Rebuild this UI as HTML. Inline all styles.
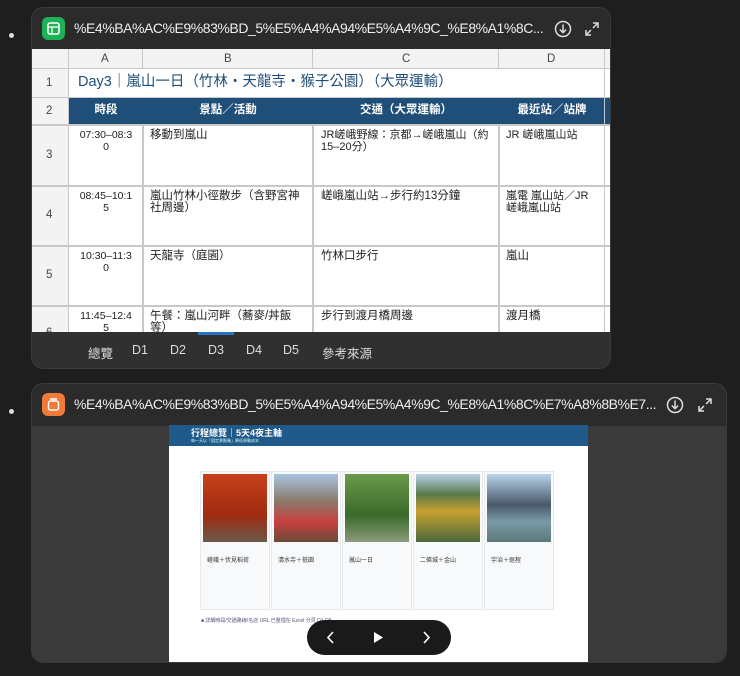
<!DOCTYPE html>
<html><head><meta charset="utf-8"><style>
*{margin:0;padding:0;box-sizing:border-box}
body{width:740px;height:676px;background:#1e1e1e;font-family:"Liberation Sans","Noto Sans CJK TC",sans-serif;position:relative;overflow:hidden;color:#222}
.dot{position:absolute;width:5px;height:5px;border-radius:50%;background:#ddd;left:9px}
.card{position:absolute;background:#2b2b2b;border:1px solid #3a3a3a;border-radius:12px;overflow:hidden}
.hdr{position:absolute;left:0;right:0;top:0;height:42px;color:#eee;font-size:14px}
.hdr .ic{position:absolute;left:10px;top:9px;width:23px;height:23px;border-radius:6px}
.hdr .t{position:absolute;left:42px;top:12px;white-space:nowrap;letter-spacing:-0.45px}
.abs{position:absolute}
.g{position:absolute;background:#c8c8c8}
.cell{position:absolute;font-size:11.5px;line-height:12px;color:#222}
.tab{position:absolute;top:343px;color:#ddd;font-size:12.5px}
.sc{position:absolute;top:46px;width:70px;height:139px;background:#f7f9fb;border:1px solid #e6e8ea}
.im{position:absolute;top:49px;width:64px;height:68px}
.st{position:absolute;top:130px;font-size:6px;color:#333;white-space:nowrap}
</style></head><body>
<div class="dot" style="top:33px"></div>
<div class="dot" style="top:409px"></div>

<div class="card" style="left:31px;top:7px;width:580px;height:362px">
 <div class="hdr"><div class="ic" style="background:#1fb157"><svg width="23" height="23"><rect x="6" y="6" width="11" height="11" rx="2" fill="none" stroke="#fff" stroke-width="1.5"/><line x1="6" y1="10" x2="17" y2="10" stroke="#fff" stroke-width="1.3"/><line x1="10" y1="10" x2="10" y2="17" stroke="#fff" stroke-width="1.3"/></svg></div>
 <div class="t">%E4%BA%AC%E9%83%BD_5%E5%A4%A94%E5%A4%9C_%E8%A1%8C...</div>
 <svg class="abs" style="left:522px;top:12px" width="18" height="18"><circle cx="9" cy="9" r="7.5" fill="none" stroke="#ddd" stroke-width="1.5"/><path d="M9 4.5v8M5.8 9.5L9 12.7l3.2-3.2" fill="none" stroke="#ddd" stroke-width="1.5"/></svg>
 <svg class="abs" style="left:551px;top:12px" width="18" height="18"><path d="M10 3h5v5M15 3l-5 5M8 15H3v-5M3 15l5-5" fill="none" stroke="#ddd" stroke-width="1.5"/></svg>
 </div>
</div>
<div class="abs" style="left:32px;top:49px;width:578px;height:283px;background:#fff;overflow:hidden">
 <div class="abs" style="left:0;top:0;width:578px;height:19px;background:#f3f3f3"></div>
 <div class="abs" style="left:0;top:0;width:37px;height:283px;background:#f3f3f3"></div>
 <div class="abs" style="left:37px;top:48px;width:541px;height:27px;background:#1f4e79"></div>
 <div class="g" style="left:0;top:19px;width:578px;height:1px"></div>
 <div class="g" style="left:0;top:48px;width:578px;height:1px"></div>
 <div class="g" style="left:0;top:75px;width:578px;height:2px"></div>
 <div class="g" style="left:0;top:136px;width:578px;height:2px"></div>
 <div class="g" style="left:0;top:196px;width:578px;height:2px"></div>
 <div class="g" style="left:0;top:256px;width:578px;height:2px"></div>
 <div class="g" style="left:36px;top:0;width:1px;height:283px"></div>
 <div class="g" style="left:110px;top:0;width:1px;height:19px"></div><div class="g" style="left:110px;top:75px;width:2px;height:208px"></div>
 <div class="g" style="left:280px;top:0;width:1px;height:19px"></div><div class="g" style="left:280px;top:75px;width:2px;height:208px"></div>
 <div class="g" style="left:466px;top:0;width:1px;height:19px"></div><div class="g" style="left:466px;top:75px;width:2px;height:208px"></div>
 <div class="g" style="left:572px;top:0;width:1px;height:283px"></div>
 <div class="cell" style="left:69px;top:4px;color:#444">A</div>
 <div class="cell" style="left:192px;top:4px;color:#444">B</div>
 <div class="cell" style="left:370px;top:4px;color:#444">C</div>
 <div class="cell" style="left:515px;top:4px;color:#444">D</div>
 <div class="cell" style="left:14px;top:28px;color:#444">1</div>
 <div class="cell" style="left:14px;top:56px;color:#444">2</div>
 <div class="cell" style="left:14px;top:100px;color:#444">3</div>
 <div class="cell" style="left:14px;top:160px;color:#444">4</div>
 <div class="cell" style="left:14px;top:220px;color:#444">5</div>
 <div class="cell" style="left:14px;top:278px;color:#444">6</div>
 <div class="cell" style="left:46px;top:25px;font-size:14.5px;line-height:16px;color:#1f4e79;white-space:nowrap">Day3｜嵐山一日（竹林・天龍寺・猴子公園）（大眾運輸）</div>
 <div class="cell" style="left:37px;width:74px;top:55px;color:#fff;font-weight:bold;text-align:center">時段</div>
 <div class="cell" style="left:111px;width:170px;top:55px;color:#fff;font-weight:bold;text-align:center">景點／活動</div>
 <div class="cell" style="left:281px;width:186px;top:55px;color:#fff;font-weight:bold;text-align:center">交通（大眾運輸）</div>
 <div class="cell" style="left:467px;width:106px;top:55px;color:#fff;font-weight:bold;text-align:center">最近站／站牌</div>
 <div class="cell" style="left:40px;width:68px;top:80px;font-size:10.5px;text-align:center">07:30–08:3<br>0</div>
 <div class="cell" style="left:118px;top:80px">移動到嵐山</div>
 <div class="cell" style="left:289px;width:175px;top:80px;font-size:11px">JR嵯峨野線：京都→嵯峨嵐山（約15–20分）</div>
 <div class="cell" style="left:474px;top:80px;font-size:11px">JR 嵯峨嵐山站</div>
 <div class="cell" style="left:40px;width:68px;top:141px;font-size:10.5px;text-align:center">08:45–10:1<br>5</div>
 <div class="cell" style="left:118px;width:158px;top:141px">嵐山竹林小徑散步（含野宮神社周邊）</div>
 <div class="cell" style="left:289px;top:141px">嵯峨嵐山站→步行約13分鐘</div>
 <div class="cell" style="left:474px;width:96px;top:141px;font-size:11px">嵐電 嵐山站／JR 嵯峨嵐山站</div>
 <div class="cell" style="left:40px;width:68px;top:201px;font-size:10.5px;text-align:center">10:30–11:3<br>0</div>
 <div class="cell" style="left:118px;top:201px">天龍寺（庭園）</div>
 <div class="cell" style="left:289px;top:201px">竹林口步行</div>
 <div class="cell" style="left:474px;top:201px">嵐山</div>
 <div class="cell" style="left:40px;width:68px;top:261px;font-size:10.5px;text-align:center">11:45–12:4<br>5</div>
 <div class="cell" style="left:118px;width:158px;top:261px">午餐：嵐山河畔（蕎麥/丼飯等）</div>
 <div class="cell" style="left:289px;top:261px">步行到渡月橋周邊</div>
 <div class="cell" style="left:474px;top:261px">渡月橋</div>
</div>
<div class="abs" style="left:32px;top:332px;width:578px;height:36px;background:#303030;border-radius:0 0 11px 11px"></div>
<div class="abs" style="left:198px;top:332px;width:36px;height:3px;background:#2a73c4"></div>
<div class="tab" style="left:88px">總覽</div>
<div class="tab" style="left:132px">D1</div>
<div class="tab" style="left:170px">D2</div>
<div class="tab" style="left:208px">D3</div>
<div class="tab" style="left:246px">D4</div>
<div class="tab" style="left:283px">D5</div>
<div class="tab" style="left:322px">參考來源</div>

<div class="card" style="left:31px;top:383px;width:696px;height:280px">
 <div class="hdr"><div class="ic" style="background:#f07a3a"><svg width="23" height="23"><rect x="6.5" y="8" width="10" height="9" rx="2" fill="none" stroke="#fff" stroke-width="1.4"/><line x1="8" y1="6" x2="15" y2="6" stroke="#fff" stroke-width="1.4"/></svg></div>
 <div class="t">%E4%BA%AC%E9%83%BD_5%E5%A4%A94%E5%A4%9C_%E8%A1%8C%E7%A8%8B%E7...</div>
 <svg class="abs" style="left:634px;top:12px" width="18" height="18"><circle cx="9" cy="9" r="7.5" fill="none" stroke="#ddd" stroke-width="1.5"/><path d="M9 4.5v8M5.8 9.5L9 12.7l3.2-3.2" fill="none" stroke="#ddd" stroke-width="1.5"/></svg>
 <svg class="abs" style="left:664px;top:12px" width="18" height="18"><path d="M10 3h5v5M15 3l-5 5M8 15H3v-5M3 15l5-5" fill="none" stroke="#ddd" stroke-width="1.5"/></svg>
 </div>
 <div class="abs" style="left:0;top:42px;width:696px;height:238px;background:#3a3a3a"></div>
</div>
<div class="abs" style="left:169px;top:425px;width:419px;height:237px;background:#fff;overflow:hidden">
 <div class="abs" style="left:0;top:0;width:419px;height:21px;background:#1f5a8a"></div>
 <div class="abs" style="left:22px;top:1px;color:#fff;font-size:9px;font-weight:bold;white-space:nowrap">行程總覽｜5天4夜主軸</div>
 <div class="abs" style="left:22px;top:13px;color:#cfe;font-size:4px;white-space:nowrap">每一天以「固定景點軸」降低移動成本</div>
 <div class="sc" style="left:31px"></div><div class="sc" style="left:102px"></div><div class="sc" style="left:173px"></div><div class="sc" style="left:244px"></div><div class="sc" style="left:315px"></div>
 <div class="im" style="left:34px;background:linear-gradient(#c8401a,#a02a10 60%,#6a5a4a)"></div>
 <div class="im" style="left:105px;background:linear-gradient(#a8c4e0,#8a7a6a 40%,#c84040 70%,#6a4a3a)"></div>
 <div class="im" style="left:176px;background:linear-gradient(#6a9a4a,#3a6a2a 60%,#8a9a7a)"></div>
 <div class="im" style="left:247px;background:linear-gradient(#b8d0e8,#5a7a4a 30%,#c8a030 55%,#4a6a3a)"></div>
 <div class="im" style="left:318px;background:linear-gradient(#b8d4ec,#4a5a6a 45%,#7a9aa8 70%,#5a7a7a)"></div>
 <div class="st" style="left:38px">嵯峨＋伏見稻荷</div>
 <div class="st" style="left:109px">清水寺＋祇園</div>
 <div class="st" style="left:180px">嵐山一日</div>
 <div class="st" style="left:251px">二條城＋金山</div>
 <div class="st" style="left:322px">宇治＋返程</div>
 <div class="abs" style="left:32px;top:192px;font-size:5px;color:#557;white-space:nowrap">■ 詳細時段/交通路線/名店 URL 已整理在 Excel 分頁 D1-D5</div>
</div>
<div class="abs" style="left:307px;top:620px;width:144px;height:35px;background:#1a1a1a;border-radius:18px"></div>
<svg class="abs" style="left:307px;top:620px" width="144" height="35"><path d="M26 12l-5 5.5 5 5.5" fill="none" stroke="#fff" stroke-width="1.6"/><path d="M67 12v11l9-5.5z" fill="#fff"/><path d="M117 12l5 5.5-5 5.5" fill="none" stroke="#fff" stroke-width="1.6"/></svg>
</body></html>
